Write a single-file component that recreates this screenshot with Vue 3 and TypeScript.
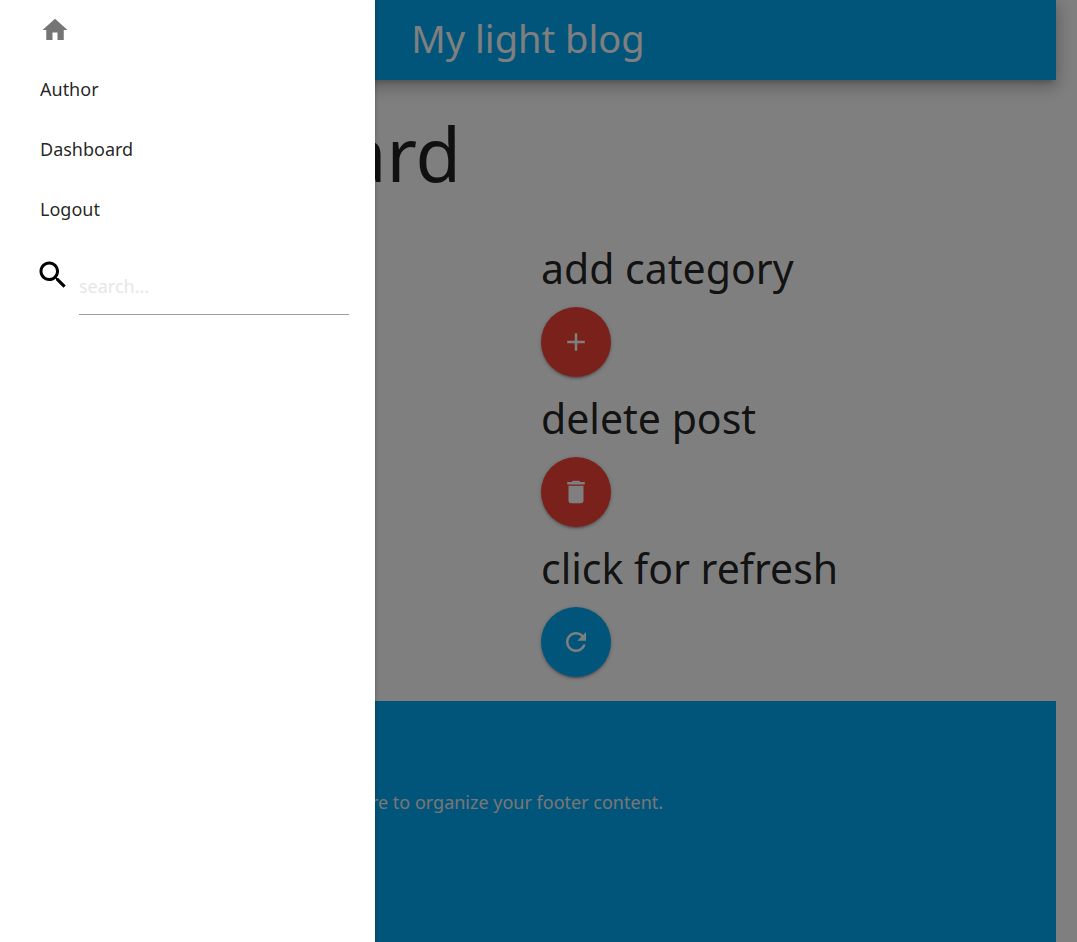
<script setup lang="ts">
import { ref } from 'vue'

interface Action {
  label: string
  icon: string
  tone: 'red' | 'blue'
}

const paths: Record<string, string> = {
  home: 'M10 20v-6h4v6h5v-8h3L12 3 2 12h3v8z',
  search:
    'M15.5 14h-.79l-.28-.27C15.41 12.59 16 11.11 16 9.5 16 5.91 13.09 3 9.5 3S3 5.91 3 9.5 5.91 16 9.5 16c1.61 0 3.09-.59 4.23-1.57l.27.28v.79l5 4.99L20.49 19l-4.99-5zm-6 0C7.01 14 5 11.99 5 9.5S7.01 5 9.5 5 14 7.01 14 9.5 11.99 14 9.5 14z',
  add: 'M19 13h-6v6h-2v-6H5v-2h6V5h2v6h6v2z',
  trash:
    'M6 19c0 1.1.9 2 2 2h8c1.1 0 2-.9 2-2V7H6v12zM19 4h-3.5l-1-1h-5l-1 1H5v2h14V4z',
  edit: 'M3 17.25V21h3.75L17.81 9.94l-3.75-3.75L3 17.25zM20.71 7.04c.39-.39.39-1.02 0-1.41l-2.34-2.34c-.39-.39-1.02-.39-1.41 0l-1.83 1.83 3.75 3.75 1.83-1.83z',
  refresh:
    'M17.65 6.35C16.2 4.9 14.21 4 12 4c-4.42 0-7.99 3.58-7.99 8s3.57 8 7.99 8c3.73 0 6.84-2.55 7.73-6h-2.08c-.82 2.33-3.04 4-5.65 4-3.31 0-6-2.69-6-6s2.69-6 6-6c1.66 0 3.14.69 4.22 1.78L13 11h7V4l-2.35 2.35z',
}

const columns: Action[][] = [
  [
    { label: 'add post', icon: 'add', tone: 'red' },
    { label: 'edit post', icon: 'edit', tone: 'red' },
    { label: 'remove a category', icon: 'trash', tone: 'red' },
  ],
  [
    { label: 'add category', icon: 'add', tone: 'red' },
    { label: 'delete post', icon: 'trash', tone: 'red' },
    { label: 'click for refresh', icon: 'refresh', tone: 'blue' },
  ],
]

const links = ['Author', 'Dashboard', 'Logout']
const query = ref('')
</script>

<template>
  <div class="shell">
    <div class="page">
      <header class="topbar">
        <a class="brand" href="#">My light blog</a>
      </header>
      <main class="content">
        <h1>Dashboard</h1>
        <div class="columns">
          <div v-for="(column, i) in columns" :key="i" class="column">
            <section v-for="action in column" :key="action.label" class="action">
              <h2>{{ action.label }}</h2>
              <button type="button" class="fab" :class="action.tone" :aria-label="action.label">
                <svg viewBox="0 0 24 24" aria-hidden="true"><path :d="paths[action.icon]" /></svg>
              </button>
            </section>
          </div>
        </div>
      </main>
      <footer class="footer">
        <p>You can use rows and columns here to organize your footer content.</p>
      </footer>
    </div>
    <div class="overlay"></div>
    <nav class="drawer" aria-label="Main">
      <a class="home" href="#" aria-label="Home">
        <svg viewBox="0 0 24 24" aria-hidden="true"><path :d="paths.home" /></svg>
      </a>
      <a v-for="link in links" :key="link" class="link" href="#">{{ link }}</a>
      <form class="search" @submit.prevent>
        <label for="search" aria-label="Search">
          <svg viewBox="0 0 24 24" aria-hidden="true"><path :d="paths.search" /></svg>
        </label>
        <input id="search" v-model="query" type="text" placeholder="search..." />
      </form>
    </nav>
  </div>
</template>

<style>
body {
  margin: 0;
  background: #fff;
}
</style>

<style scoped>
* {
  box-sizing: border-box;
}
.shell {
  position: relative;
  min-height: 100vh;
  display: flex;
  overflow: hidden;
  font-family: 'Noto Sans', 'Open Sans', sans-serif;
  font-size: 18px;
  color: rgba(0, 0, 0, 0.87);
}
svg {
  display: block;
  fill: currentColor;
}
a {
  color: inherit;
  text-decoration: none;
}
.page {
  flex: 1;
  display: flex;
  flex-direction: column;
  margin-right: 21px;
}
.topbar {
  display: flex;
  justify-content: center;
  height: 80px;
  background: #03a9f4;
  color: #fff;
  box-shadow: 0 8px 17px 2px rgba(0, 0, 0, 0.14), 0 3px 14px 2px rgba(0, 0, 0, 0.12),
    0 5px 5px -3px rgba(0, 0, 0, 0.2);
}
.brand {
  font-size: 38px;
  line-height: 76px;
}
h1,
h2,
p {
  margin: 0;
  font-weight: 400;
}
h1 {
  padding: 30px 0 0 78px;
  font-size: 74px;
  line-height: 88px;
}
.columns {
  display: grid;
  grid-template-columns: 1fr 1fr;
  padding: 46px 0 20px;
}
.column {
  padding: 0 13px;
}
.action {
  height: 150px;
}
.action:last-child {
  height: 137px;
}
h2 {
  font-size: 41px;
  line-height: 48px;
  margin-bottom: 15px;
}
.fab {
  display: grid;
  place-items: center;
  width: 70px;
  height: 70px;
  padding: 0;
  border: 0;
  border-radius: 50%;
  color: #fff;
  box-shadow: 0 2px 2px 0 rgba(0, 0, 0, 0.14), 0 3px 1px -2px rgba(0, 0, 0, 0.12),
    0 1px 5px 0 rgba(0, 0, 0, 0.2);
}
.fab svg {
  width: 30px;
  height: 30px;
}
.red {
  background: #f44336;
}
.blue {
  background: #03a9f4;
}
.footer {
  flex: 1;
  padding: 88px 86px;
  background: #03a9f4;
  color: #eee;
  line-height: 27px;
}
.overlay {
  position: absolute;
  inset: 0;
  background: rgba(0, 0, 0, 0.5);
}
.drawer {
  position: absolute;
  inset: 0 auto 0 0;
  width: 375px;
  background: #fff;
  box-shadow: 0 2px 2px 0 rgba(0, 0, 0, 0.14), 0 3px 1px -2px rgba(0, 0, 0, 0.12),
    0 1px 5px 0 rgba(0, 0, 0, 0.2);
}
.home,
.link {
  display: block;
  height: 60px;
  padding: 0 40px;
  line-height: 58px;
}
.home {
  padding-top: 15px;
  color: #757575;
}
.home svg {
  width: 30px;
  height: 30px;
}
.search {
  display: flex;
  align-items: flex-start;
  gap: 8px;
  padding: 17px 26px 0 35px;
}
.search label {
  flex: none;
  color: #000;
}
.search svg {
  width: 36px;
  height: 36px;
}
.search input {
  flex: 1;
  min-width: 0;
  height: 58px;
  padding: 0;
  border: 0;
  border-bottom: 1px solid #9e9e9e;
  background: transparent;
  color: inherit;
  font: inherit;
  outline: none;
}
.search input::placeholder {
  color: #e6e6e6;
  opacity: 1;
}
</style>
